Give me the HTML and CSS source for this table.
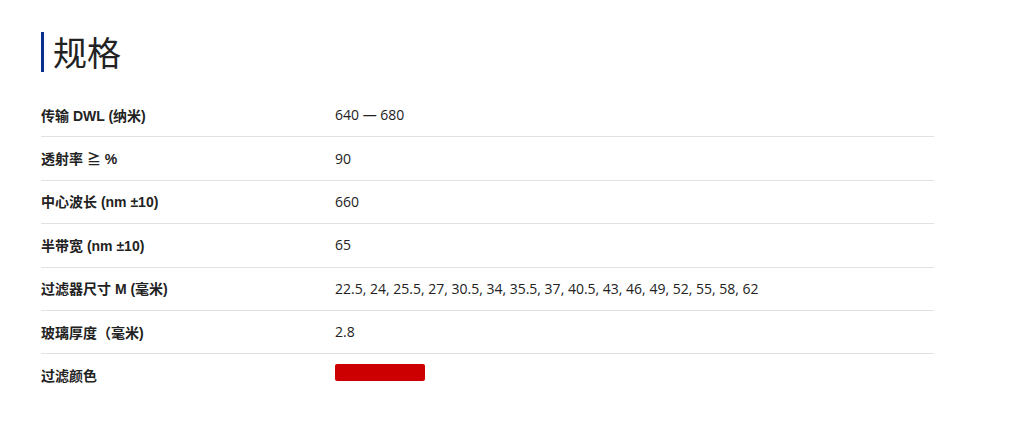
FILE: index.html
```html
<!DOCTYPE html>
<html lang="zh">
<head>
<meta charset="utf-8">
<title>规格</title>
<link rel="stylesheet" href="styles.css">
</head>
<body>
<section class="specs">
  <h2 class="title">规格</h2>
  <div class="table">
    <div class="row"><div class="label">传输 DWL (纳米)</div><div class="value">640 — 680</div></div>
    <div class="row"><div class="label">透射率 ≧ %</div><div class="value">90</div></div>
    <div class="row"><div class="label">中心波长 (nm ±10)</div><div class="value">660</div></div>
    <div class="row"><div class="label">半带宽 (nm ±10)</div><div class="value">65</div></div>
    <div class="row"><div class="label">过滤器尺寸 M (毫米)</div><div class="value">22.5, 24, 25.5, 27, 30.5, 34, 35.5, 37, 40.5, 43, 46, 49, 52, 55, 58, 62</div></div>
    <div class="row"><div class="label">玻璃厚度（毫米)</div><div class="value">2.8</div></div>
    <div class="row last"><div class="label">过滤颜色</div><div class="value"><span class="swatch"></span></div></div>
  </div>
</section>
</body>
</html>
```

FILE: styles.css
```css
html, body {
  margin: 0;
  padding: 0;
  background: #fff;
}
body {
  font-family: "Open Sans", "Noto Sans CJK SC", sans-serif;
  color: #222;
}
.specs {
  padding: 32px 90px 0 41px;
}
.title {
  margin: 0;
  border-left: 3px solid #0b2f8f;
  padding-left: 9px;
  height: 40px;
  font-size: 34px;
  line-height: 40px;
  font-weight: 400;
  color: #222;
  font-family: "Noto Sans CJK SC", sans-serif;
}
.table {
  margin-top: 22px;
  width: 893px;
}
.row {
  display: flex;
  align-items: center;
  height: 42.4px;
  border-bottom: 1px solid #e2e2e2;
}
.row.last {
  border-bottom: none;
}
.label {
  width: 294px;
  font-size: 14px;
  font-weight: 700;
  font-family: "Liberation Sans", "Noto Sans CJK SC", sans-serif;
  color: #222;
  margin-top: -1px;
}
.value {
  color: #222;
  font-size: 14px;
  font-family: "Open Sans", "Noto Sans CJK SC", sans-serif;
  margin-top: -1px;
}
.swatch {
  display: block;
  width: 90px;
  height: 17px;
  border-radius: 2px;
  background: #cc0000;
  margin-top: -6px;
}
```
